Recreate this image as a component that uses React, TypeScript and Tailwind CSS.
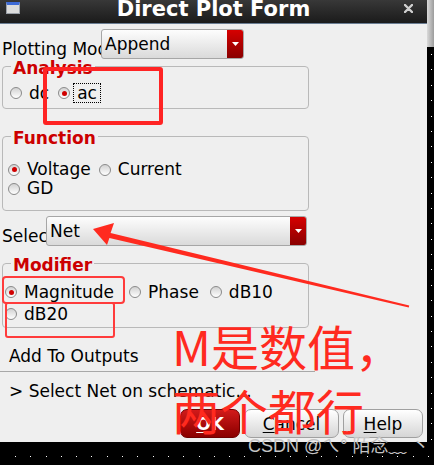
import React from 'react';

function Radio({ checked }: { checked?: boolean }) {
  return (
    <span className="flex h-[12px] w-[12px] shrink-0 items-center justify-center rounded-full border border-[#8a8a8a] bg-gradient-to-b from-[#d2d2d2] to-[#ffffff]">
      {checked && <span className="h-[5px] w-[5px] rounded-full bg-[#d00000]" />}
    </span>
  );
}

function Option({ label, checked, focus, className = '' }: { label: string; checked?: boolean; focus?: boolean; className?: string }) {
  return (
    <span className={`flex items-center ${focus ? 'gap-[3px]' : 'gap-[7px]'} ${className}`}>
      <Radio checked={checked} />
      {focus ? (
        <span className="border border-dotted border-black px-[3px] leading-[18px]">{label}</span>
      ) : (
        <span>{label}</span>
      )}
    </span>
  );
}

function Combo({ value, className = '' }: { value: string; className?: string }) {
  return (
    <div className={`relative flex h-[30px] items-center rounded-[3px] border border-[#a6a6a6] bg-gradient-to-b from-[#fdfdfd] to-[#dadada] pl-[3px] ${className}`}>
      <span className="flex-1 leading-[20px]">{value}</span>
      <span className="flex h-full w-[16px] items-center justify-center rounded-r-[2px] bg-gradient-to-b from-[#d60000] to-[#8a0000]">
        <svg width="7" height="4" viewBox="0 0 7 4">
          <path d="M0 0h7L3.5 4z" fill="#fff" />
        </svg>
      </span>
    </div>
  );
}

function Group({ title, className = '', children }: { title: string; className?: string; children: React.ReactNode }) {
  return (
    <fieldset className={`ml-[2px] w-[307px] rounded-[4px] border border-[#b9b9b9] ${className}`}>
      <legend className="ml-[8px] px-[2px] pt-[4px] text-[17px] font-bold leading-[16px] text-[#cc0000]">{title}</legend>
      {children}
    </fieldset>
  );
}

export default function App() {
  const sideDots = Array.from({ length: 26 });
  const bottomDots = Array.from({ length: 28 });

  return (
    <div className="relative h-[465px] w-[434px] overflow-hidden bg-black font-['DejaVu_Sans',sans-serif] text-[17px] leading-[20px] text-black">
      <div className="flex">
        {/* dialog window */}
        <div className="flex h-[442px] w-[427px] flex-col bg-[#efefef]">
          <div className="grid h-[24px] shrink-0 grid-cols-[1fr_auto_1fr] border-b border-[#6a7d93] bg-gradient-to-b from-[#383838] to-[#1b1b1b]">
            <div className="pl-[6px] pt-[2px]">
              <div className="h-[12px] w-[14px] border border-[#9aa0a8] border-t-[3px] border-t-[#3d6ad6] bg-[#dcdcdc]" />
            </div>
            <div className="text-[21px] font-bold leading-[19px] text-white">Direct Plot Form</div>
            <div className="flex justify-end pr-[14px] pt-[4px]">
              <svg width="9" height="9" viewBox="0 0 9 9">
                <path d="M1 1l7 7M8 1L1 8" stroke="#cfcfcf" strokeWidth="2.4" strokeLinecap="round" />
              </svg>
            </div>
          </div>

          <div className="mt-[5px] flex items-end">
            <span className="w-[101px] whitespace-nowrap pl-[2px]">Plotting Mode</span>
            <Combo value="Append" className="w-[143px]" />
          </div>

          <Group title="Analysis" className="-mt-[3px]">
            <div className="mb-[5px] mt-[7px] flex h-[20px] items-center pl-[7px]">
              <Option label="dc" />
              <Option label="ac" checked focus className="ml-[9px]" />
            </div>
          </Group>

          <Group title="Function" className="mt-[17px]">
            <div className="flex flex-col pb-[12px] pl-[5px] pt-[14px] leading-[19px]">
              <div className="flex items-center">
                <Option label="Voltage" checked />
                <Option label="Current" className="ml-[8px]" />
              </div>
              <div className="flex items-center">
                <Option label="GD" />
              </div>
            </div>
          </Group>

          <div className="mt-[5px] flex items-end">
            <span className="w-[46px] whitespace-nowrap pl-[2px]">Select</span>
            <Combo value="Net" className="w-[261px]" />
          </div>

          <Group title="Modifier" className="mt-[7px]">
            <div className="flex flex-col pb-[2px] pl-[2px] pt-[8px] leading-[22px]">
              <div className="flex items-center">
                <Option label="Magnitude" checked />
                <Option label="Phase" className="ml-[15px]" />
                <Option label="dB10" className="ml-[11px]" />
              </div>
              <div className="flex items-center">
                <Option label="dB20" />
              </div>
            </div>
          </Group>

          <div className="mt-[18px] pl-[9px]">Add To Outputs</div>
          <div className="mt-[5px] h-px w-[315px] bg-[#a8a8a8]" />
          <div className="mt-[9px] pl-[9px]">&gt; Select Net on schematic...</div>

          <div className="mt-[8px] flex justify-end gap-[4px] pr-[4px]">
            <button className="h-[29px] w-[60px] rounded-[7px] border border-[#6e0000] bg-gradient-to-b from-[#d21a1a] to-[#8a0000] font-bold text-white">
              <span className="underline underline-offset-2">O</span>K
            </button>
            <button className="h-[29px] w-[95px] rounded-[7px] border border-[#a0a0a0] bg-gradient-to-b from-[#ffffff] to-[#d6d6d6]">
              <span className="underline underline-offset-2">C</span>ancel
            </button>
            <button className="h-[29px] w-[80px] rounded-[7px] border border-[#a0a0a0] bg-gradient-to-b from-[#ffffff] to-[#d6d6d6]">
              <span className="underline underline-offset-2">H</span>elp
            </button>
          </div>
        </div>

        {/* desktop strip on the right */}
        <div className="flex w-[7px] flex-col">
          <div className="h-[47px] bg-gradient-to-r from-[#dadada] to-[#9c9c9c]" />
          <div className="flex flex-col gap-[14.4px] pl-[4px] pt-[7px]">
            {sideDots.map((_, i) => (
              <span key={i} className="h-px w-px bg-white" />
            ))}
          </div>
        </div>
      </div>

      {/* desktop grid below */}
      <div className="flex gap-[14.3px] pl-[15px] pt-[14px]">
        {bottomDots.map((_, i) => (
          <span key={i} className="h-px w-px shrink-0 bg-white" />
        ))}
      </div>

      {/* annotations drawn over the screenshot */}
      <div className="absolute left-[43px] top-[67px] h-[58px] w-[120px] rounded-[3px] border-[4px] border-[#ff2424]" />
      <div className="absolute left-[2px] top-[276px] h-[28px] w-[123px] rounded-[4px] border-2 border-[#ff3b3b]" />
      <div className="absolute left-[5px] top-[302px] h-[36px] w-[110px] rounded-[3px] border-2 border-[#ff3b3b]" />
      <svg className="pointer-events-none absolute left-0 top-0" width="434" height="465">
        <polygon
          points="93,229 114,223 110.6,233.1 409.2,305.5 408.8,307.6 109.4,237.9 107,245"
          fill="#ff2a1f"
        />
      </svg>
      <div className="absolute left-[172px] top-[316px] font-['Noto_Sans_CJK_SC',sans-serif] text-[48px] leading-[58px] text-[#ff2a1f]">
        <div>M是数值，</div>
        <div className="mt-[6px]">两个都行</div>
      </div>
      <div className="absolute left-[248px] top-[436px] whitespace-nowrap font-['Liberation_Sans','Noto_Sans_CJK_SC',sans-serif] text-[18px] leading-[20px] text-[#c4c4c4]">
        CSDN @ㄟ° 陌念﹏ 丶
      </div>
    </div>
  );
}
